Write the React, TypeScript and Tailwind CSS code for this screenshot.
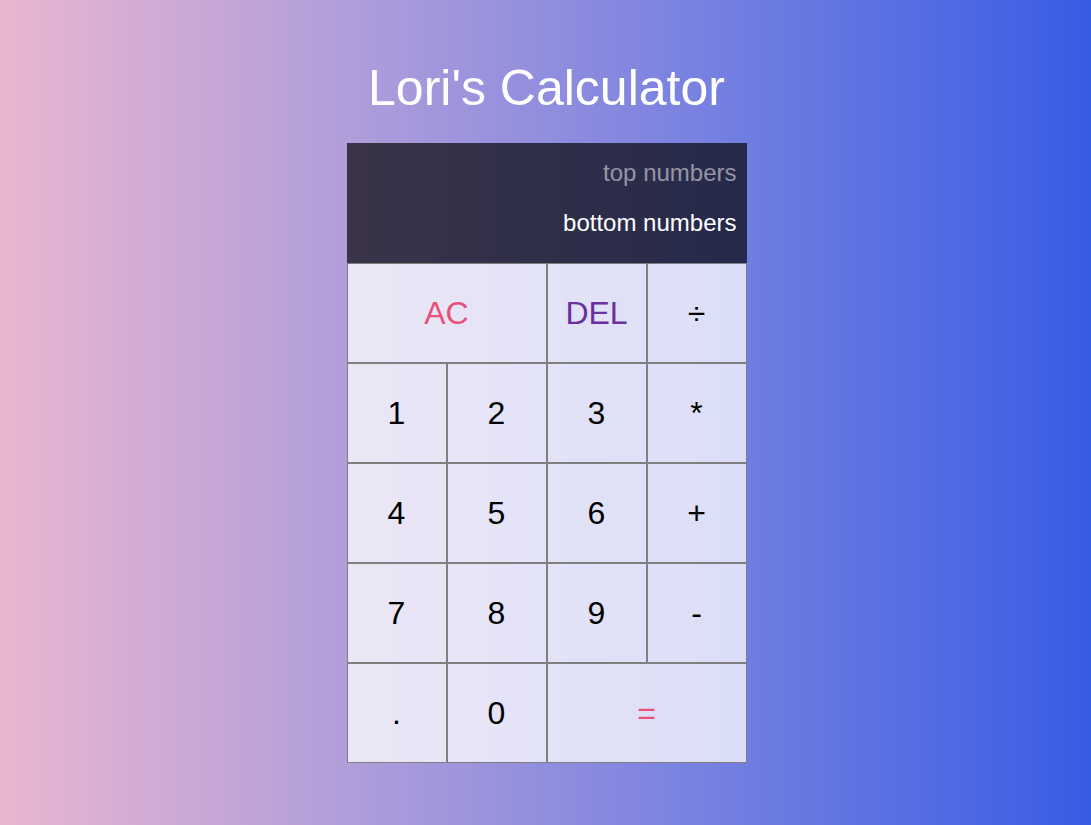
export default function App() {
  const btn =
    "flex items-center justify-center border border-[#7f7f7f] bg-white/75 text-[32px]";

  return (
    <main
      className="min-h-screen w-full bg-gradient-to-r from-[#eab6d0] to-[#385be4] pt-[63px] pb-10"
      style={{ fontFamily: '"Liberation Sans", Arial, sans-serif' }}
    >
      <h1 className="mb-[30px] pl-[2px] text-center text-[50px] leading-none text-white">
        Lori's Calculator
      </h1>

      <div className="mx-auto grid w-[400px] translate-x-[1px] grid-cols-[repeat(4,100px)] grid-rows-[120px_repeat(5,100px)]">
        <div className="col-span-4 flex flex-col items-end gap-[14px] bg-[rgba(0,0,0,0.67)] px-[10px] pt-[12px] text-2xl leading-normal">
          <div className="text-white/50">top numbers</div>
          <div className="text-white">bottom numbers</div>
        </div>

        <button className={`${btn} col-span-2 text-[#e8507a]`}>AC</button>
        <button className={`${btn} text-[#6a30a0]`}>DEL</button>
        <button className={`${btn} text-black`}>÷</button>

        <button className={`${btn} text-black`}>1</button>
        <button className={`${btn} text-black`}>2</button>
        <button className={`${btn} text-black`}>3</button>
        <button className={`${btn} text-black`}>*</button>

        <button className={`${btn} text-black`}>4</button>
        <button className={`${btn} text-black`}>5</button>
        <button className={`${btn} text-black`}>6</button>
        <button className={`${btn} text-black`}>+</button>

        <button className={`${btn} text-black`}>7</button>
        <button className={`${btn} text-black`}>8</button>
        <button className={`${btn} text-black`}>9</button>
        <button className={`${btn} text-black`}>-</button>

        <button className={`${btn} text-black`}>.</button>
        <button className={`${btn} text-black`}>0</button>
        <button className={`${btn} col-span-2 text-[#e8507a]`}>=</button>
      </div>
    </main>
  );
}
